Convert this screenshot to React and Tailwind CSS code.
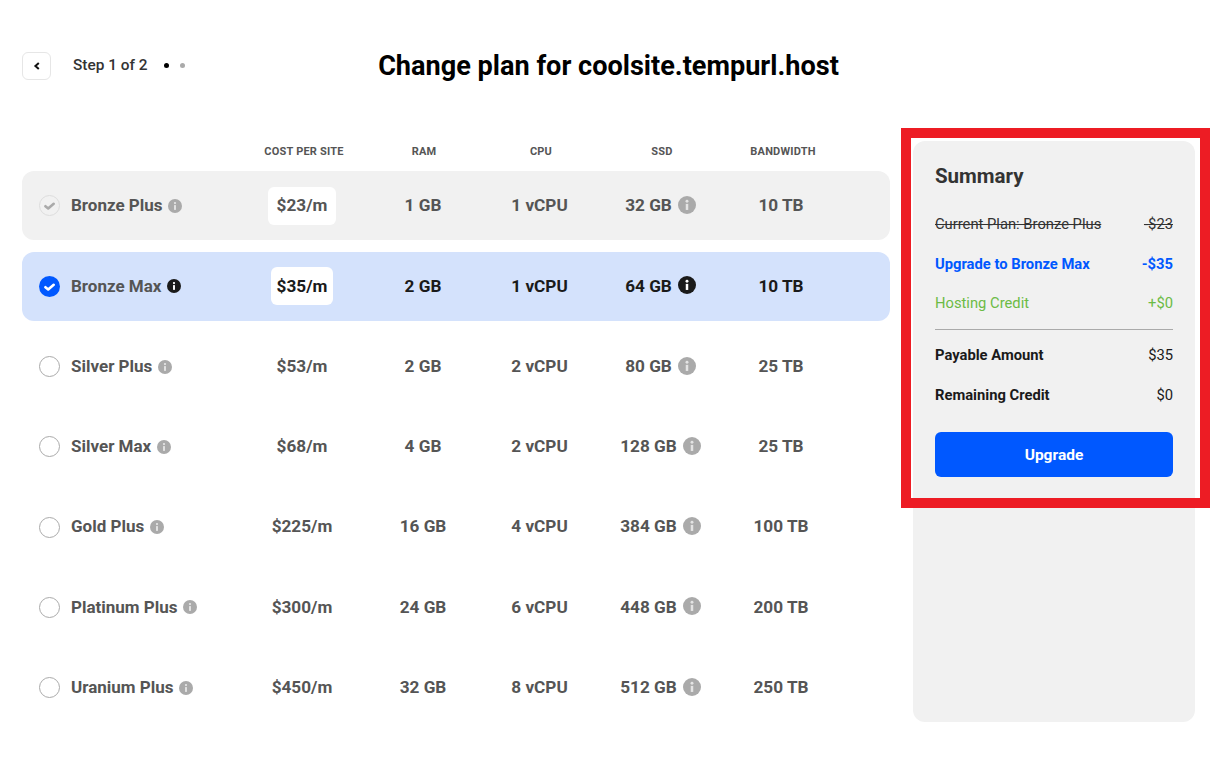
const columns = [
  { label: "COST PER SITE", className: "" },
  { label: "RAM", className: "pl-[2px]" },
  { label: "CPU", className: "" },
  { label: "SSD", className: "" },
  { label: "BANDWIDTH", className: "" },
];

const plans = [
  { name: "Bronze Plus", cost: "$23/m", ram: "1 GB", cpu: "1 vCPU", ssd: "32 GB", bandwidth: "10 TB", status: "current" },
  { name: "Bronze Max", cost: "$35/m", ram: "2 GB", cpu: "1 vCPU", ssd: "64 GB", bandwidth: "10 TB", status: "selected" },
  { name: "Silver Plus", cost: "$53/m", ram: "2 GB", cpu: "2 vCPU", ssd: "80 GB", bandwidth: "25 TB" },
  { name: "Silver Max", cost: "$68/m", ram: "4 GB", cpu: "2 vCPU", ssd: "128 GB", bandwidth: "25 TB" },
  { name: "Gold Plus", cost: "$225/m", ram: "16 GB", cpu: "4 vCPU", ssd: "384 GB", bandwidth: "100 TB" },
  { name: "Platinum Plus", cost: "$300/m", ram: "24 GB", cpu: "6 vCPU", ssd: "448 GB", bandwidth: "200 TB" },
  { name: "Uranium Plus", cost: "$450/m", ram: "32 GB", cpu: "8 vCPU", ssd: "512 GB", bandwidth: "250 TB" },
];

const gridCols = "grid grid-cols-[222px_120px_118px_118px_124px_118px_48px] items-center";

function InfoIcon({ dark, className }) {
  return (
    <svg viewBox="0 0 16 16" className={className}>
      <circle cx="8" cy="8" r="8" fill={dark ? "#1a1a1a" : "#aaaaaa"} />
      <circle cx="8" cy="4.6" r="1.3" fill={dark ? "#ffffff" : "#e4e4e4"} />
      <rect x="6.9" y="7" width="2.2" height="5.4" fill={dark ? "#ffffff" : "#e4e4e4"} />
    </svg>
  );
}

function CheckMark({ color }) {
  return (
    <svg viewBox="0 0 21 21" className="w-[21px] h-[21px]">
      <path d="M6.4 11.2 L9.2 13.4 L14.7 8.8" fill="none" stroke={color} strokeWidth="2.6" strokeLinecap="round" strokeLinejoin="round" />
    </svg>
  );
}

function Radio({ status }) {
  if (status === "selected") {
    return (
      <div className="w-[21px] h-[21px] rounded-full bg-[#0058ff]">
        <CheckMark color="#ffffff" />
      </div>
    );
  }
  if (status === "current") {
    return (
      <div className="w-[21px] h-[21px] rounded-full border border-[#dddddd] flex items-center justify-center">
        <div className="shrink-0">
          <CheckMark color="#aaaaaa" />
        </div>
      </div>
    );
  }
  return <div className="w-[21px] h-[21px] rounded-full border border-[#aaaaaa] bg-white" />;
}

function PlanRow({ plan }) {
  const selected = plan.status === "selected";
  const current = plan.status === "current";
  const valueColor = selected ? "text-[#1a1a1a]" : "text-[#555555]";

  return (
    <div className={`${gridCols} h-[69px] rounded-xl ${selected ? "bg-[#d4e2fc]" : current ? "bg-[#f1f1f1]" : ""}`}>
      <div className="flex items-center pl-[17px]">
        <Radio status={plan.status} />
        <span className="ml-[11px] text-[#555555]">{plan.name}</span>
        <InfoIcon dark={selected} className="ml-[5.5px] w-[14px] h-[14px]" />
      </div>
      <div className="flex justify-center pr-1 text-[17.2px] leading-[25.5px]">
        <span className={`${selected || current ? "bg-white h-[38px] flex items-center rounded-md" : ""} ${current ? "px-[8.5px]" : selected ? "px-[5.5px]" : ""} ${valueColor}`}>
          {plan.cost}
        </span>
      </div>
      <div className={`text-center text-[17.2px] leading-[25.5px] ${valueColor}`}>{plan.ram}</div>
      <div className={`text-center pr-[3px] text-[17.2px] leading-[25.5px] ${valueColor}`}>{plan.cpu}</div>
      <div className={`flex items-center justify-center gap-[6px] pr-[3px] text-[17.2px] leading-[25.5px] ${valueColor}`}>
        {plan.ssd}
        <InfoIcon dark={selected} className="w-[18px] h-[18px] -translate-y-[1px]" />
      </div>
      <div className={`text-center pr-1 text-[17.2px] leading-[25.5px] ${valueColor}`}>{plan.bandwidth}</div>
    </div>
  );
}

function SummaryLine({ label, value, className }) {
  return (
    <div className={`flex justify-between text-[14.75px] leading-5 ${className}`}>
      <span>{label}</span>
      <span>{value}</span>
    </div>
  );
}

export default function App() {
  return (
    <div className="relative h-[766px] w-full bg-white px-[22px] pt-[51px] font-['Roboto',sans-serif] overflow-hidden">
      <div className="grid grid-cols-[1fr_auto_1fr] items-center h-7">
        <div className="flex items-center">
          <button className="w-[29px] h-7 rounded-md border border-[#e6e6e6] flex items-center justify-center">
            <svg viewBox="0 0 10 10" className="w-[10px] h-[10px]">
              <path d="M6.8 2 L3.4 5 L6.8 8" fill="none" stroke="#111111" strokeWidth="2" />
            </svg>
          </button>
          <span className="ml-[22px] pt-px text-[15.4px] font-medium text-[#333333]">Step 1 of 2</span>
          <span className="ml-[17px] w-[5px] h-[5px] rounded-full bg-black" />
          <span className="ml-[11px] w-[5px] h-[5px] rounded-full bg-[#aaaaaa]" />
        </div>
        <h1 className="mr-[3px] pt-px text-[27.1px] font-bold leading-7 text-black">Change plan for coolsite.tempurl.host</h1>
        <div />
      </div>

      <div className="flex">
        <div className="w-[868px] mt-[62px]">
          <div className={`${gridCols} h-[22px] mb-[8.49px]`}>
            <div />
            {columns.map((col) => (
              <div key={col.label} className={`text-center text-[11px] font-bold tracking-[0.2px] text-[#555555] ${col.className}`}>{col.label}</div>
            ))}
          </div>
          <div className="flex flex-col gap-[11.3px] text-[17px] font-bold">
            {plans.map((plan) => (
              <PlanRow key={plan.name} plan={plan} />
            ))}
          </div>
        </div>

        <aside className="ml-[23px] mt-[62px] w-[282px] h-[581px] rounded-xl bg-[#f1f1f1] px-[22px] pt-[23px]">
          <h2 className="text-[20.5px] leading-6 font-bold text-[#333333]">Summary</h2>
          <SummaryLine label="Current Plan: Bronze Plus" value="-$23" className="mt-[26px] text-[#333333] line-through" />
          <SummaryLine label="Upgrade to Bronze Max" value="-$35" className="mt-5 text-[#0058ff] font-bold" />
          <SummaryLine label="Hosting Credit" value="+$0" className="mt-[19px] text-[#6cbb45]" />
          <div className="mt-4 border-t border-[#aaaaaa]" />
          <div className="mt-[15px] flex justify-between text-[14.75px] leading-5 text-[#1a1a1a]">
            <span className="font-bold">Payable Amount</span>
            <span>$35</span>
          </div>
          <div className="mt-5 flex justify-between text-[14.75px] leading-5 text-[#1a1a1a]">
            <span className="font-bold">Remaining Credit</span>
            <span>$0</span>
          </div>
          <button className="mt-[27px] w-full h-[45px] pt-[2px] rounded-md bg-[#0058ff] text-[15.5px] font-bold text-white">Upgrade</button>
        </aside>
      </div>

      {/* highlight frame over the summary */}
      <div className="absolute left-[901px] top-[128px] w-[309px] h-[380px] border-[10px] border-[#ed1c24] pointer-events-none" />
    </div>
  );
}
